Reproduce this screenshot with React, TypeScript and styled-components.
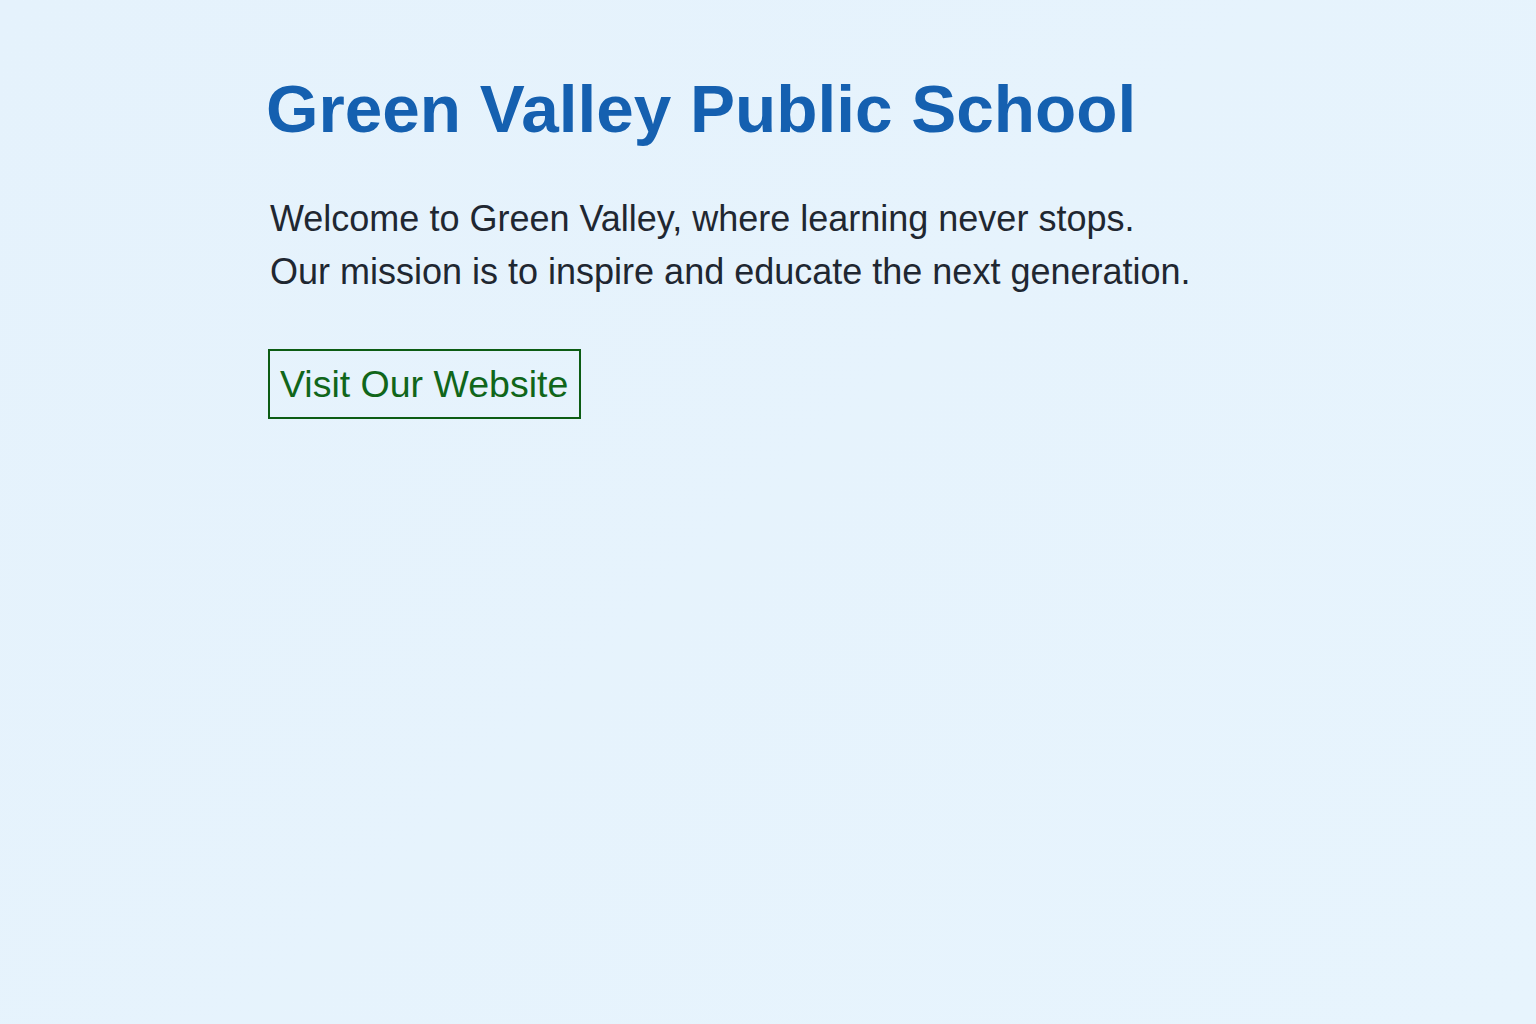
import React from "react";
import styled, { createGlobalStyle } from "styled-components";

const GlobalStyle = createGlobalStyle`
  html, body {
    margin: 0;
    padding: 0;
    background: #e6f3fc;
  }
  body {
    font-family: "Liberation Sans", Arial, sans-serif;
  }
`;

const Page = styled.main`
  min-height: 1024px;
  box-sizing: border-box;
  padding: 70px 0 0 268px;
  background: linear-gradient(135deg, #e5f2fc 0%, #e7f4fd 100%);
  display: flex;
  flex-direction: column;
  align-items: flex-start;
`;

const Title = styled.h1`
  margin: 0 0 0 -2px;
  font-family: "Liberation Sans", Arial, sans-serif;
  font-weight: 700;
  font-size: 67.5px;
  line-height: 78px;
  color: #1560b0;
`;

const Lead = styled.p`
  margin: 44px 0 0 2px;
  font-family: "Liberation Sans", Arial, sans-serif;
  font-size: 36px;
  line-height: 53px;
  color: #1f2731;
`;

const WebsiteButton = styled.a`
  margin-top: 51px;
  display: inline-block;
  padding: 12px 11px 11px 10px;
  border: 2px solid #0c5c14;
  font-family: "Liberation Sans", Arial, sans-serif;
  font-size: 37.5px;
  line-height: 43px;
  color: #10661a;
  text-decoration: none;
  background: transparent;
  cursor: pointer;
`;

export default function App() {
  return (
    <>
      <GlobalStyle />
      <Page>
        <Title>Green Valley Public School</Title>
        <Lead>
          Welcome to Green Valley, where learning never stops.
          <br />
          Our mission is to inspire and educate the next generation.
        </Lead>
        <WebsiteButton href="#">Visit Our Website</WebsiteButton>
      </Page>
    </>
  );
}
